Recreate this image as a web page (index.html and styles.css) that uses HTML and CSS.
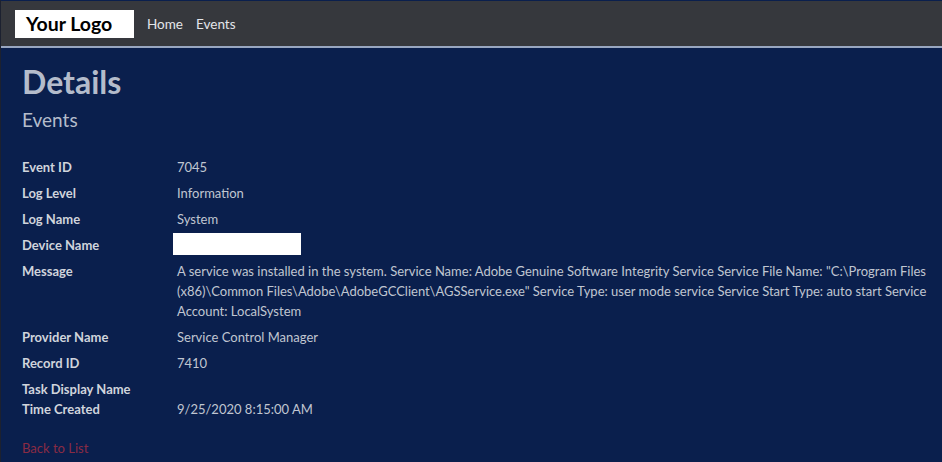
FILE: index.html
```html
<!DOCTYPE html>
<html lang="en">
<head>
<meta charset="utf-8">
<title>Details</title>
<link rel="stylesheet" href="styles.css">
</head>
<body>
<header class="navbar">
  <a class="brand" href="#">Your Logo</a>
  <nav class="nav">
    <a href="#">Home</a>
    <a href="#">Events</a>
  </nav>
</header>
<main class="content">
  <h1 class="title">Details</h1>
  <h2 class="subtitle">Events</h2>
  <dl class="details">
    <div class="row"><dt>Event ID</dt><dd>7045</dd></div>
    <div class="row"><dt>Log Level</dt><dd>Information</dd></div>
    <div class="row"><dt>Log Name</dt><dd>System</dd></div>
    <div class="row"><dt>Device Name</dt><dd><span class="redacted"></span></dd></div>
    <div class="row"><dt>Message</dt><dd>A service was installed in the system. Service Name: Adobe Genuine Software Integrity Service Service File Name: "C:\Program Files (x86)\Common Files\Adobe\AdobeGCClient\AGSService.exe" Service Type: user mode service Service Start Type: auto start Service Account: LocalSystem</dd></div>
    <div class="row"><dt>Provider Name</dt><dd>Service Control Manager</dd></div>
    <div class="row"><dt>Record ID</dt><dd>7410</dd></div>
    <div class="row row-empty"><dt>Task Display Name</dt><dd></dd></div>
    <div class="row"><dt>Time Created</dt><dd>9/25/2020 8:15:00 AM</dd></div>
  </dl>
  <a class="back" href="#">Back to List</a>
</main>
</body>
</html>
```
FILE: styles.css
```css
html, body {
  margin: 0;
  padding: 0;
}
body {
  background: #0a1f4d;
  font-family: "Lato", "Open Sans", sans-serif;
  color: #c4c9d3;
  border-left: 1px solid #1c2130;
  min-height: 462px;
  box-sizing: border-box;
}
.navbar {
  background: #36383d;
  border-top: 1px solid #0a1f4d;
  border-bottom: 2px solid #98a6c0;
  height: 45px;
  display: flex;
  align-items: center;
  padding-left: 14px;
  box-sizing: content-box;
}
.brand {
  background: #ffffff;
  color: #000000;
  font-weight: 700;
  font-size: 19.5px;
  text-decoration: none;
  width: 119px;
  height: 28px;
  line-height: 28px;
  padding-left: 11px;
  box-sizing: border-box;
  margin-top: 1px;
}
.nav {
  display: flex;
  gap: 13px;
  margin-left: 13px;
}
.nav a {
  color: #e4e6ea;
  text-decoration: none;
  font-size: 13.5px;
}
.content {
  padding: 0 5px 0 21px;
}
.title {
  margin: 14px 0 0;
  font-size: 32px;
  font-weight: 700;
  line-height: 40px;
  color: #b4bccb;
}
.subtitle {
  margin: 5px 0 0;
  font-size: 19px;
  font-weight: 400;
  line-height: 26px;
  color: #b4bccb;
}
.details {
  margin: 24px 0 0;
}
.row {
  display: grid;
  grid-template-columns: 155px 1fr;
  padding-bottom: 6px;
  font-size: 13px;
  line-height: 20px;
}
.row-empty {
  padding-bottom: 0;
}
dt {
  font-weight: 700;
  color: #d0d4dc;
}
dd {
  margin: 0;
  color: #c0c6d1;
}
.redacted {
  display: inline-block;
  width: 128px;
  height: 22px;
  background: #ffffff;
  vertical-align: top;
  margin-left: -4px;
  margin-top: -2px;
}
.back {
  display: inline-block;
  margin-top: 15px;
  color: #8a2b44;
  font-size: 13px;
  text-decoration: none;
}
```
